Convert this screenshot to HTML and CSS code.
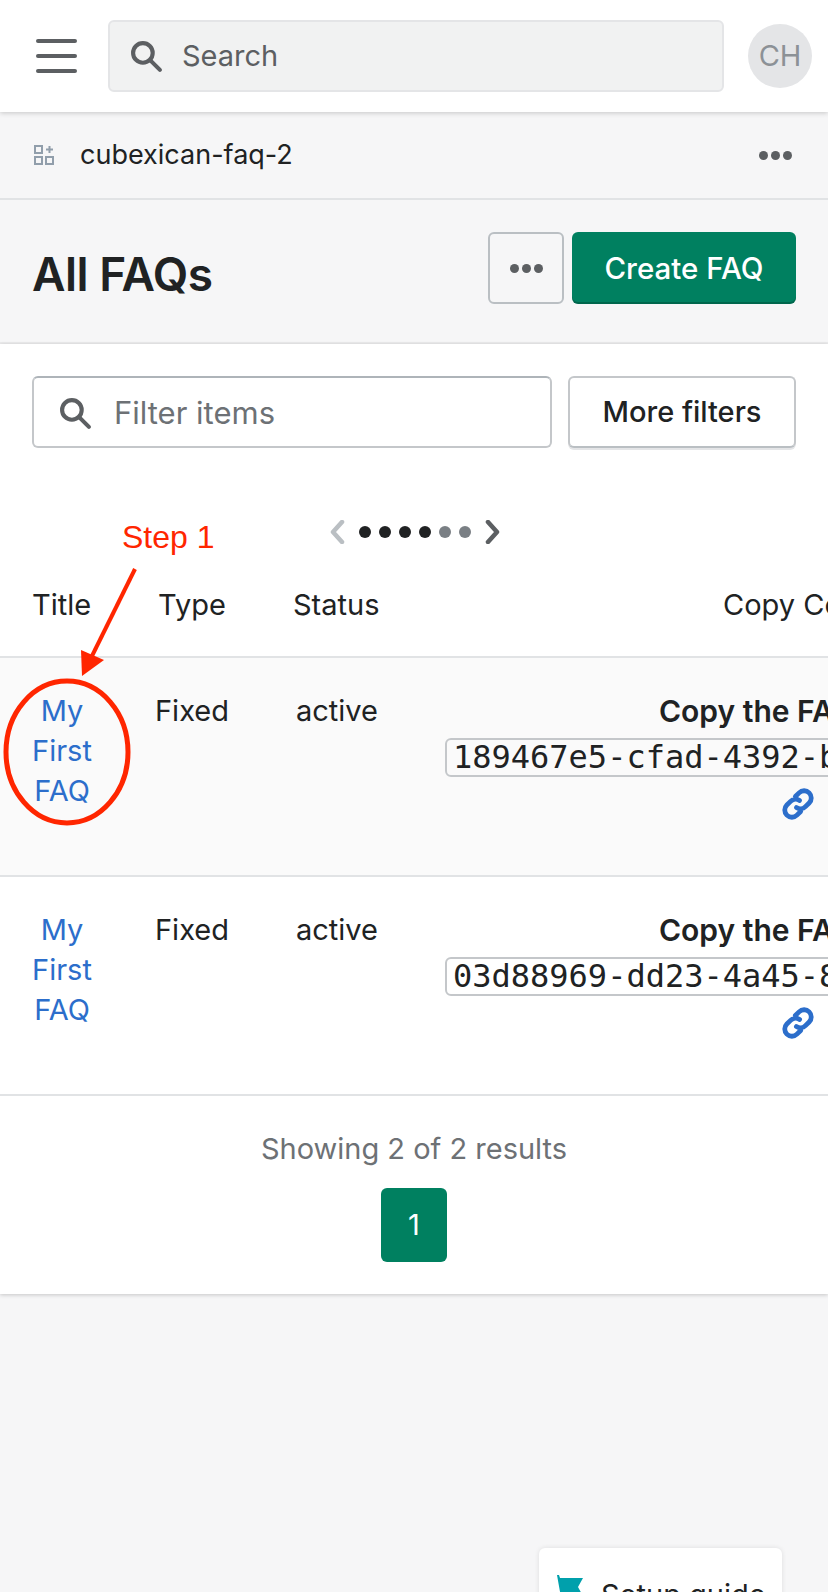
FILE: index.html
```html
<!DOCTYPE html>
<html lang="en">
<head>
    <meta charset="UTF-8">
    <meta name="viewport" content="width=device-width, initial-scale=1.0">
    <title>All FAQs</title>
    <link rel="stylesheet" href="styles.css">
</head>
<body>
    <div class="topbar">
        <button class="menu-btn" aria-label="Menu"><span></span><span></span><span></span></button>
        <div class="global-search">
            <svg class="search-icon" viewBox="0 0 32 32"><circle cx="12.5" cy="12.5" r="9.5"/><path d="M19.5 19.5 29 29"/></svg>
            <span>Search</span>
        </div>
        <div class="avatar">CH</div>
    </div>

    <div class="app-row">
        <svg class="app-icon" viewBox="0 0 20 20"><path d="M1 1h7v7H1zM1 12h7v7H1zM12 12h7v7h-7zM15.500 1v7M12 4.500h7"/></svg>
        <span class="app-name">cubexican-faq-2</span>
        <div class="dots"><i></i><i></i><i></i></div>
    </div>

    <div class="page-header">
        <h1>All FAQs</h1>
        <div class="actions">
            <button class="more-btn" aria-label="More"><span class="dots"><i></i><i></i><i></i></span></button>
            <button class="create-btn">Create FAQ</button>
        </div>
    </div>

    <div class="card">
        <div class="filters">
            <div class="filter-input">
                <svg class="search-icon" viewBox="0 0 32 32"><circle cx="12.5" cy="12.5" r="9.5"/><path d="M19.5 19.5 29 29"/></svg>
                <span>Filter items</span>
            </div>
            <button class="filters-btn">More filters</button>
        </div>

        <div class="scroller">
            <svg class="chev chev-off" viewBox="0 0 16 24"><path d="M13 2 4 12l9 10"/></svg>
            <i class="on"></i><i class="on"></i><i class="on"></i><i class="on"></i><i></i><i></i>
            <svg class="chev" viewBox="0 0 16 24"><path d="m3 2 9 10-9 10"/></svg>
        </div>

        <div class="table">
            <div class="row head">
                <div class="c-title">Title</div>
                <div class="c-type">Type</div>
                <div class="c-status">Status</div>
                <div class="c-copy"><span class="copy-head">Copy Code</span></div>
            </div>
            <div class="row tinted">
                <div class="c-title"><a href="#">My First FAQ</a></div>
                <div class="c-type">Fixed</div>
                <div class="c-status">active</div>
                <div class="c-copy">
                    <b class="copy-label">Copy the FAQ code</b>
                    <div class="code">189467e5-cfad-4392-b1c7-5e0a</div>
                    <svg class="link-icon" viewBox="0 0 32 32"><path d="M13.500 9 17 5.500a6.700 6.700 0 0 1 9.500 9.500L23 18.500a6.700 6.700 0 0 1-8.500.8M18.500 23 15 26.500A6.700 6.700 0 0 1 5.500 17L9 13.500a6.700 6.700 0 0 1 8.500-.8"/></svg>
                </div>
            </div>
            <div class="row">
                <div class="c-title"><a href="#">My First FAQ</a></div>
                <div class="c-type">Fixed</div>
                <div class="c-status">active</div>
                <div class="c-copy">
                    <b class="copy-label">Copy the FAQ code</b>
                    <div class="code">03d88969-dd23-4a45-8f10-c72b</div>
                    <svg class="link-icon" viewBox="0 0 32 32"><path d="M13.500 9 17 5.500a6.700 6.700 0 0 1 9.500 9.500L23 18.500a6.700 6.700 0 0 1-8.500.8M18.500 23 15 26.500A6.700 6.700 0 0 1 5.500 17L9 13.500a6.700 6.700 0 0 1 8.500-.8"/></svg>
                </div>
            </div>
        </div>

        <div class="pager">
            <div class="showing">Showing 2 of 2 results</div>
            <button class="page-btn">1</button>
        </div>
    </div>

    <!-- annotation drawn on top of the screenshot -->
    <div class="step-label">Step 1</div>
    <svg class="annotation" viewBox="0 0 200 280">
        <path class="arrow-line" d="M135 13 90 104"/>
        <path class="arrow-head" d="M82 120 81 94 104 104z"/>
        <ellipse class="ring" cx="67" cy="196" rx="61" ry="71"/>
    </svg>

    <div class="setup-guide">
        <svg class="flag" viewBox="0 0 28 28"><path d="M0 0h2l1 3h23l-5 9 5 9H7L5 28z"/></svg>
        <span>Setup guide</span>
    </div>
</body>
</html>
```

FILE: styles.css
```css
* {
    box-sizing: border-box;
}

html, body {
    height: 1592px;
}

body {
    margin: 0;
    position: relative;
    overflow: hidden;
    background-color: #f6f6f7;
    color: #202223;
    font-family: Inter, "Noto Sans", sans-serif;
    font-size: 29px;
    line-height: 40px;
}

button {
    font: inherit;
    cursor: pointer;
}

.topbar {
    position: relative;
    display: flex;
    align-items: center;
    height: 112px;
    padding: 0 16px 0 36px;
    background-color: #fff;
    box-shadow: 0 1px 5px rgba(0, 0, 0, 0.2);
}

.menu-btn {
    display: flex;
    flex-direction: column;
    gap: 11px;
    width: 41px;
    padding: 0;
    margin-right: 31px;
    border: none;
    background: none;
}

.menu-btn span {
    display: block;
    height: 4px;
    width: 100%;
    border-radius: 2px;
    background-color: #5c5f62;
}

.global-search {
    display: flex;
    align-items: center;
    flex: 1;
    height: 72px;
    padding-left: 20px;
    border: 2px solid #e4e5e7;
    border-radius: 6px;
    background-color: #f1f2f2;
    color: #5c5f62;
}

.search-icon {
    flex: none;
    width: 33px;
    height: 33px;
    margin-right: 19px;
    fill: none;
    stroke: #5c5f62;
    stroke-width: 4;
    stroke-linecap: round;
}

.avatar {
    display: flex;
    align-items: center;
    justify-content: center;
    width: 64px;
    height: 64px;
    margin-left: 24px;
    border-radius: 50%;
    background-color: #e4e5e7;
    color: #8c9196;
}

.app-row {
    display: flex;
    align-items: center;
    height: 88px;
    padding: 0 36px 0 34px;
    border-bottom: 2px solid #e1e3e5;
}

.app-icon {
    width: 20px;
    height: 20px;
    margin-right: 26px;
    fill: none;
    stroke: #919eab;
    stroke-width: 2;
}

.app-name {
    flex: 1;
    font-size: 27px;
}

.dots {
    display: flex;
    gap: 3px;
}

.dots i {
    width: 9px;
    height: 9px;
    border-radius: 50%;
    background-color: #5c5f62;
}

.page-header {
    display: flex;
    justify-content: space-between;
    height: 144px;
    padding: 32px 32px 0;
    border-bottom: 2px solid #ebebec;
}

.page-header h1 {
    margin: 14px 0 0;
    font-size: 46px;
    line-height: 56px;
    font-weight: 600;
    letter-spacing: -0.5px;
}

.actions {
    display: flex;
    gap: 8px;
    height: 72px;
}

.more-btn {
    display: flex;
    align-items: center;
    justify-content: center;
    width: 76px;
    border: 2px solid #babfc3;
    border-radius: 6px;
    background: none;
}

.create-btn {
    width: 224px;
    border: none;
    border-radius: 6px;
    background-color: #008060;
    box-shadow: inset 0 -2px 0 rgba(0, 0, 0, 0.2);
    color: #fff;
    font-size: 29.500px;
    font-weight: 500;
}

.card {
    height: 950px;
    background-color: #fff;
    box-shadow: 0 1px 4px rgba(0, 0, 0, 0.2);
}

.filters {
    display: flex;
    gap: 16px;
    padding: 32px 32px 0;
}

.filter-input {
    display: flex;
    align-items: center;
    flex: 1;
    height: 72px;
    padding: 2px 0 0 25px;
    border: 2px solid #c4c7ca;
    border-top-color: #aeb4b9;
    border-radius: 6px;
    color: #6d7175;
    font-size: 31px;
}

.filter-input .search-icon {
    margin-right: 22px;
}

.filters-btn {
    width: 228px;
    height: 72px;
    border: 2px solid #c4c7ca;
    border-bottom-color: #babfc3;
    border-radius: 6px;
    background-color: #fff;
    box-shadow: 0 2px 0 #e4e5e7;
    color: #202223;
    font-weight: 500;
}

.scroller {
    display: flex;
    align-items: center;
    gap: 8px;
    height: 30px;
    margin: 69px 0 -1px 329px;
}

.scroller i {
    width: 12px;
    height: 12px;
    border-radius: 50%;
    background-color: #7a7f84;
}

.scroller i.on {
    background-color: #202223;
}

.chev {
    width: 16px;
    height: 24px;
    margin: 0 6px;
    fill: none;
    stroke: #5c5f62;
    stroke-width: 4.500;
    stroke-linecap: round;
    stroke-linejoin: round;
}

.chev-off {
    margin-left: 0;
    stroke: #babfc3;
}

.table {
    overflow: hidden;
}

.row {
    display: grid;
    grid-template-columns: 124px 136px 154px 414px;
    height: 219px;
    padding-top: 33px;
    border-bottom: 2px solid #e1e3e5;
    text-align: center;
}

.row.head {
    height: 112px;
    padding-top: 39px;
    text-align: left;
}

.row.tinted {
    background-color: #fafafa;
}

.row > div {
    min-width: 0;
}

.head .c-title {
    padding-left: 32px;
}

.head .c-type {
    padding-left: 34px;
}

.head .c-status {
    padding-left: 33px;
}

.copy-head {
    display: block;
    padding-left: 309px;
    white-space: nowrap;
}

.row a {
    display: block;
    width: 84px;
    margin-left: 20px;
    color: #2c6ecb;
    text-decoration: none;
}

.c-copy {
    text-align: left;
    white-space: nowrap;
}

.copy-label {
    display: block;
    padding-left: 245px;
    font-size: 30px;
    font-weight: 600;
}

.code {
    width: 500px;
    height: 39px;
    margin: 7px 0 0 31px;
    padding-left: 6px;
    border: 2px solid #c4c7ca;
    border-radius: 6px;
    font-family: "DejaVu Sans Mono", monospace;
    font-size: 32px;
    line-height: 35px;
}

.link-icon {
    display: block;
    width: 34px;
    height: 34px;
    margin: 10px 0 0 367px;
    fill: none;
    stroke: #2c6ecb;
    stroke-width: 4.500;
    stroke-linecap: round;
}

.pager {
    display: flex;
    flex-direction: column;
    align-items: center;
    padding-top: 33px;
}

.showing {
    color: #6d7175;
}

.page-btn {
    width: 66px;
    height: 74px;
    margin-top: 19px;
    border: none;
    border-radius: 6px;
    background-color: #008060;
    color: #fff;
}

.step-label {
    position: absolute;
    left: 122px;
    top: 517px;
    color: #ff2600;
    font-family: "Liberation Sans", sans-serif;
    font-size: 32px;
}

.annotation {
    position: absolute;
    left: 0;
    top: 556px;
    width: 200px;
    height: 280px;
}

.arrow-line {
    stroke: #ff2600;
    stroke-width: 4;
}

.arrow-head {
    fill: #ff2600;
}

.ring {
    fill: none;
    stroke: #ff2600;
    stroke-width: 5;
}

.setup-guide {
    position: absolute;
    left: 539px;
    top: 1548px;
    display: flex;
    align-items: flex-start;
    width: 243px;
    height: 80px;
    padding: 27px 0 0 18px;
    border-radius: 6px;
    background-color: #fff;
    box-shadow: 0 0 5px rgba(0, 0, 0, 0.1);
}

.flag {
    width: 28px;
    height: 28px;
    margin-right: 16px;
    fill: #00a0ac;
}
```
